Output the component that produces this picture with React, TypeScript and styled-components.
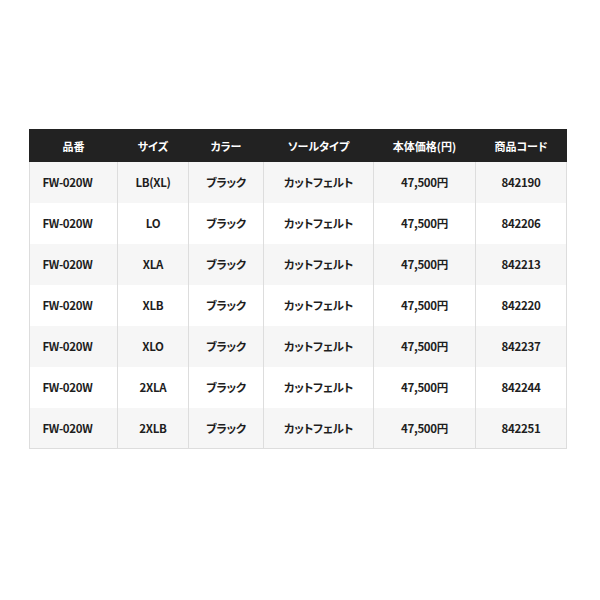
import React from "react";
import styled, { createGlobalStyle } from "styled-components";

const Global = createGlobalStyle`
  html, body { margin: 0; padding: 0; background: #fff; }
  body {
    font-family: "Noto Sans CJK JP", "Noto Sans", sans-serif;
    font-feature-settings: "palt";
  }
`;

const Page = styled.div`
  width: 600px;
  height: 600px;
  padding: 129px 0 0 29px;
  box-sizing: border-box;
`;

const Table = styled.table`
  border-collapse: collapse;
  table-layout: fixed;
  width: 537px;
`;

const Th = styled.th<{ $w: number }>`
  width: ${(p) => p.$w}px;
  height: 32px;
  padding: 0;
  background: #222222;
  color: #ffffff;
  font-size: 11px;
  font-weight: 700;
  text-align: center;
  border: 1px solid #222222;
  box-sizing: border-box;
`;

const Tr = styled.tr<{ $alt: boolean }>`
  background: ${(p) => (p.$alt ? "#f6f6f6" : "#ffffff")};
`;

const Td = styled.td<{ $padRight?: number }>`
  height: 41px;
  padding: 0 ${(p) => p.$padRight ?? 0}px 0 0;
  color: #1e1e1e;
  font-size: 11.5px;
  letter-spacing: -0.3px;
  font-weight: 700;
  text-align: center;
  border-left: 1px solid #dddddd;
  border-right: 1px solid #dddddd;
  box-sizing: border-box;
`;

const Body = styled.tbody`
  & tr:last-child td { border-bottom: 1px solid #dddddd; }
`;

const cols = [
  { label: "品番", w: 88 },
  { label: "サイズ", w: 71 },
  { label: "カラー", w: 75 },
  { label: "ソールタイプ", w: 110 },
  { label: "本体価格(円)", w: 102 },
  { label: "商品コード", w: 91 },
];

const rows = [
  ["LB(XL)", "842190"],
  ["LO", "842206"],
  ["XLA", "842213"],
  ["XLB", "842220"],
  ["XLO", "842237"],
  ["2XLA", "842244"],
  ["2XLB", "842251"],
];

export default function App() {
  return (
    <>
      <Global />
      <Page>
        <Table>
          <thead>
            <tr>
              {cols.map((c) => (
                <Th key={c.label} $w={c.w}>
                  {c.label}
                </Th>
              ))}
            </tr>
          </thead>
          <Body>
            {rows.map(([size, code], i) => (
              <Tr key={code} $alt={i % 2 === 0}>
                <Td $padRight={12}>FW-020W</Td>
                <Td>{size}</Td>
                <Td>ブラック</Td>
                <Td>カットフェルト</Td>
                <Td>47,500円</Td>
                <Td>{code}</Td>
              </Tr>
            ))}
          </Body>
        </Table>
      </Page>
    </>
  );
}
